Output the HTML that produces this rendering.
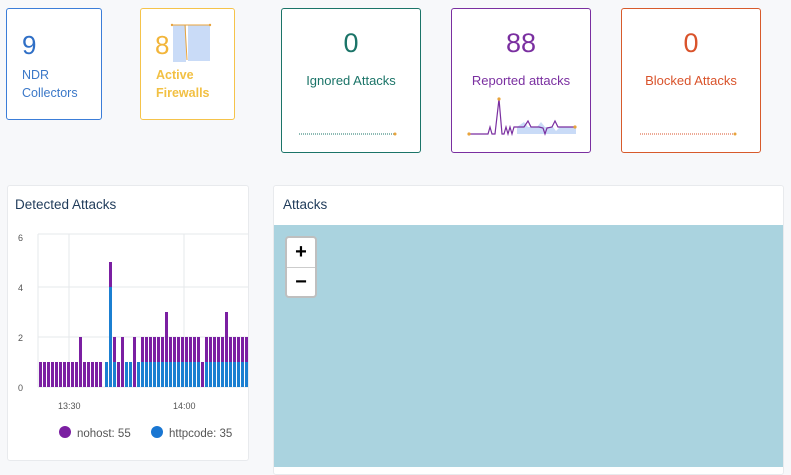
<!DOCTYPE html>
<html><head><meta charset="utf-8"><style>
body{margin:0;width:791px;height:467px;background:#f7f8fa;font-family:"Liberation Sans",sans-serif;position:relative;overflow:hidden}
.c{position:absolute;background:#fff;border:1px solid;border-radius:3px;box-sizing:border-box}
.t{position:absolute;white-space:nowrap}
</style></head><body>
<div class="c" style="left:6px;top:8px;width:96px;height:112px;border-color:#3b7dd8"></div>
<div class="t" style="left:22px;top:30px;font-size:26px;color:#2f6fc6">9</div>
<div class="t" style="left:22px;top:66px;font-size:12.5px;color:#3b78c8;line-height:18px">NDR<br>Collectors</div>

<div class="c" style="left:140px;top:8px;width:95px;height:112px;border-color:#f5c34a"></div>
<svg style="position:absolute;left:170px;top:22px" width="44" height="42"><rect x="3" y="3" width="13" height="37" fill="#c9dbf7"/><rect x="18" y="3" width="22" height="36" fill="#c9dbf7"/><path d="M2 3H40M15 3L17 38" stroke="#e8a33b" stroke-width="1" fill="none"/><circle cx="2" cy="3" r="1.2" fill="#e8a33b"/><circle cx="40" cy="3" r="1.2" fill="#e8a33b"/></svg>
<div class="t" style="left:155px;top:30px;font-size:26px;color:#f2b53a">8</div>
<div class="t" style="left:156px;top:66px;font-size:12.5px;color:#f2c043;line-height:18px;font-weight:bold">Active<br>Firewalls</div>

<div class="c" style="left:281px;top:8px;width:140px;height:145px;border-color:#1b7468"></div>
<div class="t" style="left:281px;width:140px;text-align:center;top:28px;font-size:27px;color:#1b7468">0</div>
<div class="t" style="left:281px;width:140px;text-align:center;top:73px;font-size:13px;color:#1b7468">Ignored Attacks</div>
<svg style="position:absolute;left:295px;top:128px" width="110" height="10"><path d="M4 6H100" stroke="#1b7468" stroke-dasharray="1 1"/><circle cx="100" cy="6" r="1.5" fill="#e8a33b"/></svg>

<div class="c" style="left:451px;top:8px;width:140px;height:145px;border-color:#7a2fa0"></div>
<div class="t" style="left:451px;width:140px;text-align:center;top:28px;font-size:27px;color:#7a2fa0">88</div>
<div class="t" style="left:451px;width:140px;text-align:center;top:73px;font-size:13px;color:#7a2fa0">Reported attacks</div>
<svg style="position:absolute;left:440px;top:90px" width="140" height="50"><path d="M77 37L84 32L88 37L97 37L101 32L105 37L113 37L116 41L120 37L136 37V44H77Z" fill="#c9dbf7"/><path d="M29 44H48L50 37L52 44H55L59 9L62 44H64L66 37L68 44L70 37L72 44L74 37L77 37L84 37L88 31L91 37L99 37L103 38L105 44L107 38L112 37L115 31L118 37L135 37" stroke="#7a2fa0" fill="none" stroke-width="1.2"/><circle cx="29" cy="44" r="1.6" fill="#e8a33b"/><circle cx="59" cy="9" r="1.6" fill="#e8a33b"/><circle cx="135" cy="37" r="1.6" fill="#e8a33b"/></svg>

<div class="c" style="left:621px;top:8px;width:140px;height:145px;border-color:#d75a2b"></div>
<div class="t" style="left:621px;width:140px;text-align:center;top:28px;font-size:27px;color:#d9532b">0</div>
<div class="t" style="left:621px;width:140px;text-align:center;top:73px;font-size:13px;color:#d9532b">Blocked Attacks</div>
<svg style="position:absolute;left:635px;top:128px" width="110" height="10"><path d="M5 6H100" stroke="#d9532b" stroke-dasharray="1 1"/><circle cx="100" cy="6" r="1.5" fill="#e8a33b"/></svg>

<div class="c" style="left:7px;top:185px;width:242px;height:276px;border-color:#e8eaed"></div>
<div class="t" style="left:15px;top:197px;font-size:13.5px;color:#1f3b5a">Detected Attacks</div>
<svg style="position:absolute;left:0;top:225px" width="250" height="230" id="ch">
<g stroke="#e6e8eb" stroke-width="1"><path d="M38 9H248M38 62H248M38 112H248M38 162H248M38 9V162M69 9V162M184 9V162"/></g>
<g font-size="9" fill="#555" font-family="Liberation Sans"><text x="18" y="16">6</text><text x="18" y="66">4</text><text x="18" y="116">2</text><text x="18" y="166">0</text><text x="58" y="184">13:30</text><text x="173" y="184">14:00</text></g>
<g id="bars"></g>
<circle cx="65" cy="207" r="6" fill="#7b1fa2"/><text x="77" y="212" font-size="11.5" fill="#555" font-family="Liberation Sans">nohost: 55</text>
<circle cx="157" cy="207" r="6" fill="#1976d2"/><text x="169" y="212" font-size="11.5" fill="#555" font-family="Liberation Sans">httpcode: 35</text>
</svg>
<script>
(function(){var g=document.getElementById('bars'),s='',U=25,B=162;
function bar(x,b,p){if(b)s+='<rect x="'+x+'" y="'+(B-b*U)+'" width="3" height="'+b*U+'" fill="#1b7fd1"/>';if(p)s+='<rect x="'+x+'" y="'+(B-(b+p)*U)+'" width="3" height="'+p*U+'" fill="#7b1fa2"/>';}
for(var i=0;i<16;i++)bar(39+4*i,0,i==10?2:1);
var d=[[1,0],[4,1],[1,1],[0,1],[0,2],[1,0],[1,0],[0,2],[1,0]];
for(var j=0;j<36;j++){var v=d[j]||[1,1];if(j==15||j==30)v=[1,2];if(j==24)v=[0,1];if(105+4*j<246)bar(105+4*j,v[0],v[1]);}
g.innerHTML=s;})();
</script>

<div class="c" style="left:273px;top:185px;width:511px;height:290px;border-color:#e8eaed"></div>
<div class="t" style="left:283px;top:197px;font-size:13.5px;color:#1f3b5a">Attacks</div>
<div style="position:absolute;left:274px;top:225px;width:509px;height:242px;background:#aad3df"></div>
<div style="position:absolute;left:285px;top:236px;width:32px;height:62px;border:2px solid rgba(0,0,0,.25);border-radius:4px;box-sizing:border-box;background:#fff">
<div style="height:29px;border-bottom:1px solid #ccc;text-align:center;font:bold 20px/29px 'Liberation Sans';color:#000">+</div>
<div style="text-align:center;font:bold 20px/28px 'Liberation Sans';color:#000">−</div></div>
</body></html>
